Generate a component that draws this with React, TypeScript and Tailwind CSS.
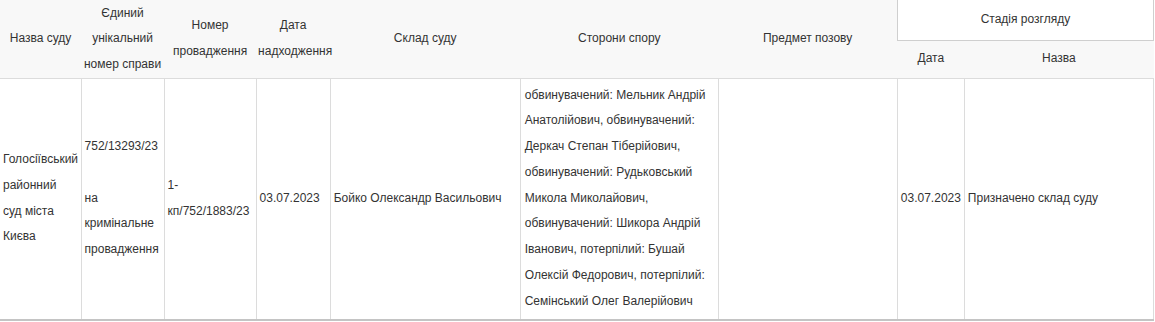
const columns = [81, 83, 92, 74, 190, 198, 179, 67, 189];

const parties =
  "обвинувачений: Мельник Андрій Анатолійович, обвинувачений: Деркач Степан Тіберійович, обвинувачений: Рудьковський Микола Миколайович, обвинувачений: Шикора Андрій Іванович, потерпілий: Бушай Олексій Федорович, потерпілий: Семінський Олег Валерійович";

export default function App() {
  const th = "font-normal text-center align-middle px-[2px] py-0 leading-[25.5px] border-b border-[#dcdcdc]";
  const td = "align-middle px-[3px] py-[4px] leading-[25.8px] border-r border-[#dcdcdc] last:border-r";

  return (
    <div className="w-[1155px] h-[322px] bg-white font-['Liberation_Sans',Arial,sans-serif] text-[12px] text-[#333]">
      <table className="w-[1154px] table-fixed border-collapse">
        <colgroup>
          {columns.map((w, i) => (
            <col key={i} style={{ width: w }} />
          ))}
        </colgroup>
        <thead className="bg-[#f8f8f8]">
          <tr className="h-[40px]">
            <th rowSpan={2} className={th}>Назва суду</th>
            <th rowSpan={2} className={th}>
              Єдиний унікальний номер справи
            </th>
            <th rowSpan={2} className={th}>
              Номер провадження
            </th>
            <th rowSpan={2} className={th}>
              Дата надходження
            </th>
            <th rowSpan={2} className={th}>Склад суду</th>
            <th rowSpan={2} className={th}>Сторони спору</th>
            <th rowSpan={2} className={th}>Предмет позову</th>
            <th
              colSpan={2}
              className="font-normal text-center align-middle bg-white border-x border-b border-[#cfcfcf] leading-[25.5px]"
            >
              Стадія розгляду
            </th>
          </tr>
          <tr className="h-[38px]">
            <th className={th}>Дата</th>
            <th className={th}>Назва</th>
          </tr>
        </thead>
        <tbody>
          <tr className="border-b-2 border-[#c4c4c4]">
            <td className={td}>Голосіївський районний суд міста Києва</td>
            <td className={td}>
              752/13293/23
              <br />
              <br />
              на кримінальне провадження
            </td>
            <td className={td}>1-кп/752/1883/23</td>
            <td className={td}>03.07.2023</td>
            <td className={td}>Бойко Олександр Васильович</td>
            <td className={`${td} px-[4px]`}>{parties}</td>
            <td className={td}></td>
            <td className={td}>03.07.2023</td>
            <td className={td}>Призначено склад суду</td>
          </tr>
        </tbody>
      </table>
    </div>
  );
}
